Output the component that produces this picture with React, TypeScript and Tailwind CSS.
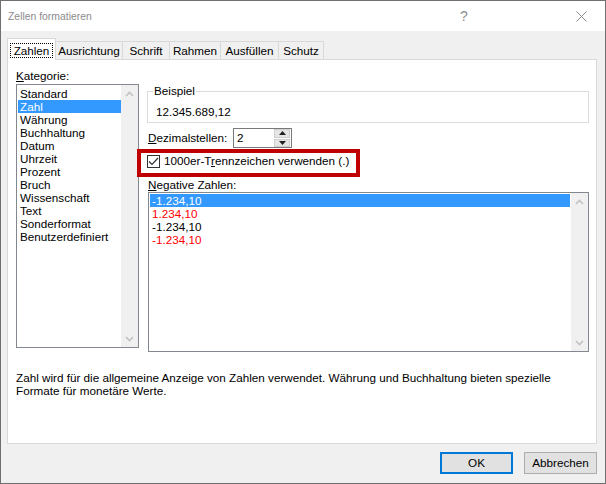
import React from 'react';

const categories = [
  'Standard',
  'Zahl',
  'Währung',
  'Buchhaltung',
  'Datum',
  'Uhrzeit',
  'Prozent',
  'Bruch',
  'Wissenschaft',
  'Text',
  'Sonderformat',
  'Benutzerdefiniert',
];

const negatives = [
  { label: '-1.234,10', color: 'text-white', selected: true },
  { label: '1.234,10', color: 'text-[#ff0000]', selected: false },
  { label: '-1.234,10', color: 'text-black', selected: false },
  { label: '-1.234,10', color: 'text-[#ff0000]', selected: false },
];

const tabs = [
  { label: 'Ausrichtung', w: 'w-[68px]' },
  { label: 'Schrift', w: 'w-[48px]' },
  { label: 'Rahmen', w: 'w-[52px]' },
  { label: 'Ausfüllen', w: 'w-[59px]' },
  { label: 'Schutz', w: 'w-[46px]' },
];

function Chevron({ up }: { up?: boolean }) {
  return (
    <svg width="9" height="6" viewBox="0 0 9 6">
      <polyline
        points={up ? '1,5 4.5,1.5 8,5' : '1,1 4.5,4.5 8,1'}
        fill="none"
        stroke="#c2c2c2"
        strokeWidth="1.6"
      />
    </svg>
  );
}

/** Disabled scrollbar column used by both list boxes. */
function ScrollCol() {
  return (
    <div className="w-[17px] h-full bg-[#f0f0f0] flex flex-col items-center justify-between pt-[6px] pb-[5px]">
      <Chevron up />
      <Chevron />
    </div>
  );
}

export default function App() {
  return (
    <div className="w-[606px] h-[484px] bg-[#f0f0f0] border border-[#6f6f6f] font-['Liberation_Sans',Arial,sans-serif] text-[11.7px] text-black leading-[14px] overflow-hidden">
      {/* Title bar */}
      <div className="h-[30px] bg-white flex items-center pr-[14px] text-[#8c8c8c]">
        <div className="flex-1 pl-[7px] text-[10.4px] pt-[1px]">Zellen formatieren</div>
        <div className="w-[20px] text-center text-[14px]">?</div>
        <div className="w-[97px]" />
        <div className="w-[20px] flex justify-center">
          <svg width="11" height="11" viewBox="0 0 11 11">
            <path d="M0.5 0.5 L10.5 10.5 M10.5 0.5 L0.5 10.5" stroke="#8c8c8c" strokeWidth="1" />
          </svg>
        </div>
      </div>

      <div className="pt-[7px] pl-[6px] pr-[8px]">
        {/* Tabs */}
        <div className="h-[21px] flex items-end">
          <div className="relative z-10 w-[49px] h-[22px] -mb-px bg-white border-t border-x border-[#d9d9d9] flex items-start justify-center pt-[4px]">
            <span className="border border-dotted border-black px-[3px] leading-[13px]">Zahlen</span>
          </div>
          {tabs.map((t) => (
            <div
              key={t.label}
              className={`${t.w} -ml-px h-[18px] border-t border-x border-[#d9d9d9] bg-[#f0f0f0] flex items-center justify-center pt-[1px]`}
            >
              {t.label}
            </div>
          ))}
        </div>

        {/* Panel */}
        <div className="h-[385px] bg-white border border-[#d9d9d9] pt-[7px]">
          <div className="flex">
            {/* Kategorie */}
            <div className="ml-[8px] w-[123px] pt-[2px]">
              <div>
                <span className="underline">K</span>ategorie:
              </div>
              <div className="mt-[1px] h-[264px] border border-[#828790] flex">
                <div className="flex-1 pt-[2px] pl-[1px]">
                  {categories.map((c, i) => (
                    <div
                      key={c}
                      className={`h-[13px] leading-[13px] pl-[2px] ${i === 1 ? 'bg-[#3399ff] text-white' : ''}`}
                    >
                      {c}
                    </div>
                  ))}
                </div>
                <ScrollCol />
              </div>
            </div>

            {/* Right column */}
            <div className="ml-[8px] w-[442px] pt-[17px]">
              <fieldset className="border border-[#dcdcdc] px-0 pb-0 m-0">
                <legend className="ml-[5px] px-[1px] leading-[14px]">Beispiel</legend>
                <div className="pl-[8px] pt-[7px] pb-[3px] leading-[14px]">12.345.689,12</div>
              </fieldset>

              <div className="mt-[5px] h-[20px] flex items-center">
                <div className="w-[86px] pl-[1px]">
                  <span className="underline">D</span>ezimalstellen:
                </div>
                <div className="w-[59px] h-[20px] border border-[#7a7a7a] bg-white flex items-center">
                  <div className="flex-1 pl-[3px]">2</div>
                  <div className="w-[16px] h-[18px] mr-[1px] flex flex-col gap-px">
                    <div className="flex-1 bg-[#e5e5e5] border border-[#cfcfcf] flex items-center justify-center">
                      <svg width="7" height="4" viewBox="0 0 7 4">
                        <polygon points="0,4 3.5,0 7,4" fill="#222" />
                      </svg>
                    </div>
                    <div className="flex-1 bg-[#e5e5e5] border border-[#cfcfcf] flex items-center justify-center">
                      <svg width="7" height="4" viewBox="0 0 7 4">
                        <polygon points="0,0 3.5,4 7,0" fill="#222" />
                      </svg>
                    </div>
                  </div>
                </div>
              </div>

              {/* Highlighted option */}
              <div className="mt-[1px] -ml-[10px] w-[223px] h-[28px] border-[4px] border-[#c00000] flex items-start pt-[2px] pl-[6px]">
                <div className="w-[13px] h-[13px] border border-[#333] bg-white flex items-center justify-center">
                  <svg width="11" height="9" viewBox="0 0 11 9">
                    <polyline points="1,4.5 4,7.5 10,1" fill="none" stroke="#333" strokeWidth="1.2" />
                  </svg>
                </div>
                <div className="ml-[4px] -mt-[1px]">
                  1000er-T<span className="underline">r</span>ennzeichen verwenden (.)
                </div>
              </div>

              <div className="pl-[1px] pt-[1px]">
                <span className="underline">N</span>egative Zahlen:
              </div>
              <div className="ml-[1px] w-[441px] h-[160px] border border-[#828790] flex">
                <div className="flex-1 pt-[1px] pl-[1px] pr-[1px]">
                  {negatives.map((n, i) => (
                    <div
                      key={i}
                      className={`h-[13px] leading-[13px] pl-[2px] ${n.color} ${n.selected ? 'bg-[#3399ff]' : ''}`}
                    >
                      {n.label}
                    </div>
                  ))}
                </div>
                <ScrollCol />
              </div>
            </div>
          </div>

          <div className="ml-[8px] mt-[19px] leading-[13px]">
            <div>
              Zahl wird für die allgemeine Anzeige von Zahlen verwendet. Währung und Buchhaltung bieten spezielle
            </div>
            <div>Formate für monetäre Werte.</div>
          </div>
        </div>

        {/* Buttons */}
        <div className="mt-[8px] flex justify-end gap-[11px]">
          <button className="w-[73px] h-[22px] bg-[#e1e1e1] border-2 border-[#0078d7] flex items-center justify-center">
            OK
          </button>
          <button className="w-[73px] h-[22px] bg-[#e1e1e1] border border-[#adadad] flex items-center justify-center">
            Abbrechen
          </button>
        </div>
      </div>
    </div>
  );
}
